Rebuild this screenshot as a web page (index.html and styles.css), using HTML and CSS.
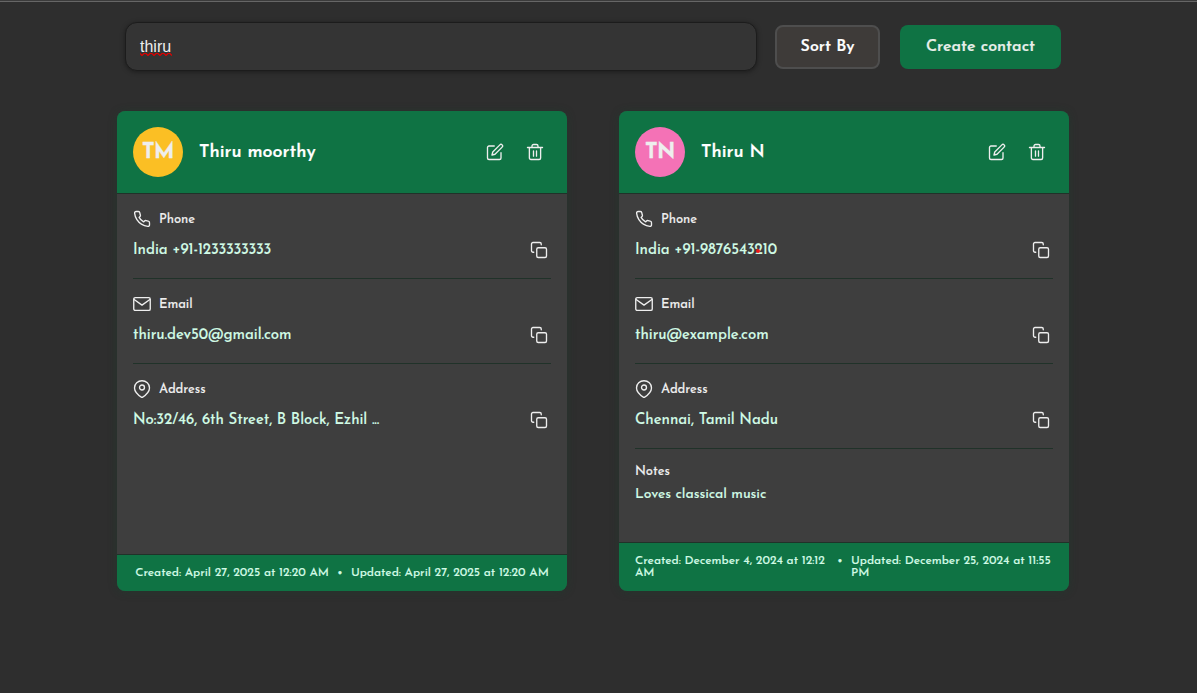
FILE: index.html
```html
<!DOCTYPE html>
<html lang="en">
<head>
<meta charset="utf-8">
<title>Contacts</title>
<link rel="stylesheet" href="styles.css">
</head>
<body>
<svg class="sprite" aria-hidden="true">
  <symbol id="phone" viewBox="0 0 24 24"><path d="M22 16.92v3a2 2 0 0 1-2.18 2 19.79 19.79 0 0 1-8.63-3.07 19.5 19.5 0 0 1-6-6 19.79 19.79 0 0 1-3.07-8.67A2 2 0 0 1 4.11 2h3a2 2 0 0 1 2 1.72 12.84 12.84 0 0 0 .7 2.81 2 2 0 0 1-.45 2.11L8.09 9.91a16 16 0 0 0 6 6l1.27-1.27a2 2 0 0 1 2.11-.45 12.84 12.84 0 0 0 2.81.7A2 2 0 0 1 22 16.92z"/></symbol>
  <symbol id="mail" viewBox="0 0 24 24"><rect x="1" y="3.500" width="22" height="17" rx="2"/><path d="M1.5 6 12 13.5 22.5 6"/></symbol>
  <symbol id="pin" viewBox="0 0 24 24"><path d="M22 10.500c0 6-7 11-10 13-3-2-10-7-10-13a10 9.500 0 0 1 20 0z"/><circle cx="12" cy="10" r="3.3"/></symbol>
  <symbol id="copy" viewBox="0 0 24 24"><rect x="9" y="9" width="13" height="13" rx="2"/><path d="M5 15H4a2 2 0 0 1-2-2V4a2 2 0 0 1 2-2h9a2 2 0 0 1 2 2v1"/></symbol>
  <symbol id="edit" viewBox="0 0 24 24"><path d="M11 4H4a2 2 0 0 0-2 2v14a2 2 0 0 0 2 2h14a2 2 0 0 0 2-2v-7"/><path d="M18.5 2.5a2.12 2.12 0 0 1 3 3L12 15l-4 1 1-4z"/></symbol>
  <symbol id="trash" viewBox="0 0 24 24"><path d="M2 6h20M19.500 6v14a2 2 0 0 1-2 2h-11a2 2 0 0 1-2-2V6M8 6V4a2 2 0 0 1 2-2h4a2 2 0 0 1 2 2v2M10 10.500v7M14 10.500v7"/></symbol>
</svg>
<main class="page">
  <header class="toolbar">
    <div class="search"><span class="misspelled">thiru<svg class="squiggle" width="32" height="3" viewBox="0 0 32 3"><path d="M0 .5 2 2.500 4 .5 6 .5 8 2.500 10 .5 12 .5 14 2.500 16 .5 18 .5 20 2.500 22 .5 24 .5 26 2.500 28 .5 30 .5 32 2.500"/></svg></span></div>
    <button class="btn sort">Sort By</button>
    <button class="btn create">Create contact</button>
  </header>
  <section class="cards">
    <article class="card">
      <div class="card-head">
        <div class="avatar amber">TM</div><h2 class="name">Thiru moorthy</h2>
        <svg class="icon"><use href="#edit"/></svg><svg class="icon"><use href="#trash"/></svg>
      </div>
      <div class="card-body">
        <div class="field"><div class="label"><svg class="icon"><use href="#phone"/></svg><span>Phone</span></div>
          <div class="value"><span>India +91-1233333333</span><svg class="icon"><use href="#copy"/></svg></div></div>
        <div class="field"><div class="label"><svg class="icon"><use href="#mail"/></svg><span>Email</span></div>
          <div class="value"><span>thiru.dev50@gmail.com</span><svg class="icon"><use href="#copy"/></svg></div></div>
        <div class="field"><div class="label"><svg class="icon"><use href="#pin"/></svg><span>Address</span></div>
          <div class="value"><span>No:32/46, 6th Street, B Block, Ezhil ...</span><svg class="icon"><use href="#copy"/></svg></div></div>
      </div>
      <footer class="card-foot single"><span>Created: April 27, 2025 at 12:20 AM</span><span class="dot">•</span><span>Updated: April 27, 2025 at 12:20 AM</span></footer>
    </article>
    <article class="card">
      <div class="card-head">
        <div class="avatar pink">TN</div><h2 class="name">Thiru N</h2>
        <svg class="icon"><use href="#edit"/></svg><svg class="icon"><use href="#trash"/></svg>
      </div>
      <div class="card-body">
        <div class="field"><div class="label"><svg class="icon"><use href="#phone"/></svg><span>Phone</span></div>
          <div class="value"><span class="marked">India +91-9876543210</span><svg class="icon"><use href="#copy"/></svg></div></div>
        <div class="field"><div class="label"><svg class="icon"><use href="#mail"/></svg><span>Email</span></div>
          <div class="value"><span>thiru@example.com</span><svg class="icon"><use href="#copy"/></svg></div></div>
        <div class="field"><div class="label"><svg class="icon"><use href="#pin"/></svg><span>Address</span></div>
          <div class="value"><span>Chennai, Tamil Nadu</span><svg class="icon"><use href="#copy"/></svg></div></div>
        <div class="notes"><div class="notes-label">Notes</div><div class="notes-text">Loves classical music</div></div>
      </div>
      <footer class="card-foot"><span class="created">Created: December 4, 2024 at 12:12<br>AM</span><span class="dot">•</span><span>Updated: December 25, 2024 at 11:55<br>PM</span></footer>
    </article>
  </section>
</main>
</body>
</html>
```
FILE: styles.css
```css
* { box-sizing: border-box; }
body {
  margin: 0;
  height: 693px;
  overflow: hidden;
  background: #2e2e2e;
  color: #eee;
  font-family: "Josefin Sans", Lato, sans-serif;
  font-weight: 500;
}
.sprite { position: absolute; width: 0; height: 0; }
.page { height: 100%; padding: 20px 128px 0 117px; border-top: 1px solid #3b3b3b; box-shadow: inset 0 1px #666; }
.toolbar { display: flex; align-items: center; height: 52px; padding: 0 8px; }
.search {
  width: 632px; height: 49px; margin-top: -1px; padding: 15px 14px;
  background: #343434; border: 1px solid #1c1c1c; border-radius: 12px;
  box-shadow: 0 1px 5px rgba(0, 0, 0, .4);
  font: 16px/18px "Liberation Sans", Arial, sans-serif;
}
.misspelled { position: relative; }
.squiggle { position: absolute; left: 0; bottom: -1px; fill: none; stroke: #e00000; stroke-width: 1.2; }
.btn { height: 44px; padding: 0 0 1px; border-radius: 8px; font: 600 16px/20px "Josefin Sans", Lato, sans-serif; white-space: nowrap; -webkit-text-stroke: .2px; }
.sort { width: 105px; margin-left: 18px; background: #3e3b39; border: 2px solid #4e4e4e; color: #fff; }
.create { width: 161px; margin-left: 20px; background: #0f7344; border: 0; color: #e8efea; }
.cards { display: flex; gap: 52px; margin-top: 38px; }
.card {
  display: flex; flex-direction: column; width: 450px; height: 480px;
  overflow: hidden; border-radius: 8px; background: #3e3e3e;
  box-shadow: 0 1px 8px rgba(25, 65, 45, .45);
}
.card-head { display: flex; align-items: center; height: 83px; padding: 0 23px 0 16px; background: #0f7344; border-bottom: 1px solid #203229; }
.avatar { width: 50px; height: 50px; border-radius: 50%; font-size: 21.5px; font-weight: 700; letter-spacing: -.5px; line-height: 51px; text-align: center; color: #eee; -webkit-text-stroke: .3px #eee; }
.amber { background: #fbbf24; }
.pink { background: #f472b6; }
.name { flex: 1; margin: 2px 0 0 16px; font-size: 18px; line-height: 24px; font-weight: 600; color: #fff; -webkit-text-stroke: .2px; }
.icon { display: block; flex: none; width: 18px; height: 18px; fill: none; stroke: #eee; stroke-width: 1.8; stroke-linecap: round; stroke-linejoin: round; }
.card-head .icon + .icon { margin-left: 22px; }
.card-body { flex: 1; padding: 0 16px; letter-spacing: -.06px; -webkit-text-stroke: .1px; }
.field { height: 85px; padding-top: 16px; border-bottom: 1px solid #203229; }
.field:last-child { border: 0; }
.label { display: flex; align-items: center; gap: 8px; height: 18px; font-size: 13px; line-height: 18px; }
.label span { padding-top: 2px; }
.value { display: flex; justify-content: space-between; align-items: center; height: 24px; margin-top: 10px; padding-right: 3px; font-size: 15px; color: #d1fae5; }
.value .icon { width: 18px; height: 18px; }
.marked { position: relative; }
.marked::after { content: ""; position: absolute; left: 121px; top: 6px; width: 4px; height: 4px; border-radius: 50%; background: #f01818; }
.notes { padding-top: 15px; }
.notes-label { font-size: 13px; line-height: 16px; }
.notes-text { margin-top: 6px; font-size: 14px; line-height: 18px; color: #d1fae5; }
.card-foot { display: flex; height: 49px; padding: 12px 16px; background: #0f7344; border-top: 1px solid #203229; font-size: 12px; line-height: 12px; letter-spacing: -.05px; -webkit-text-stroke: .1px; color: #d1fae5; white-space: nowrap; }
.single { height: 37px; justify-content: center; }
.dot { width: 22px; text-align: center; }
.created { width: 194px; }
```
